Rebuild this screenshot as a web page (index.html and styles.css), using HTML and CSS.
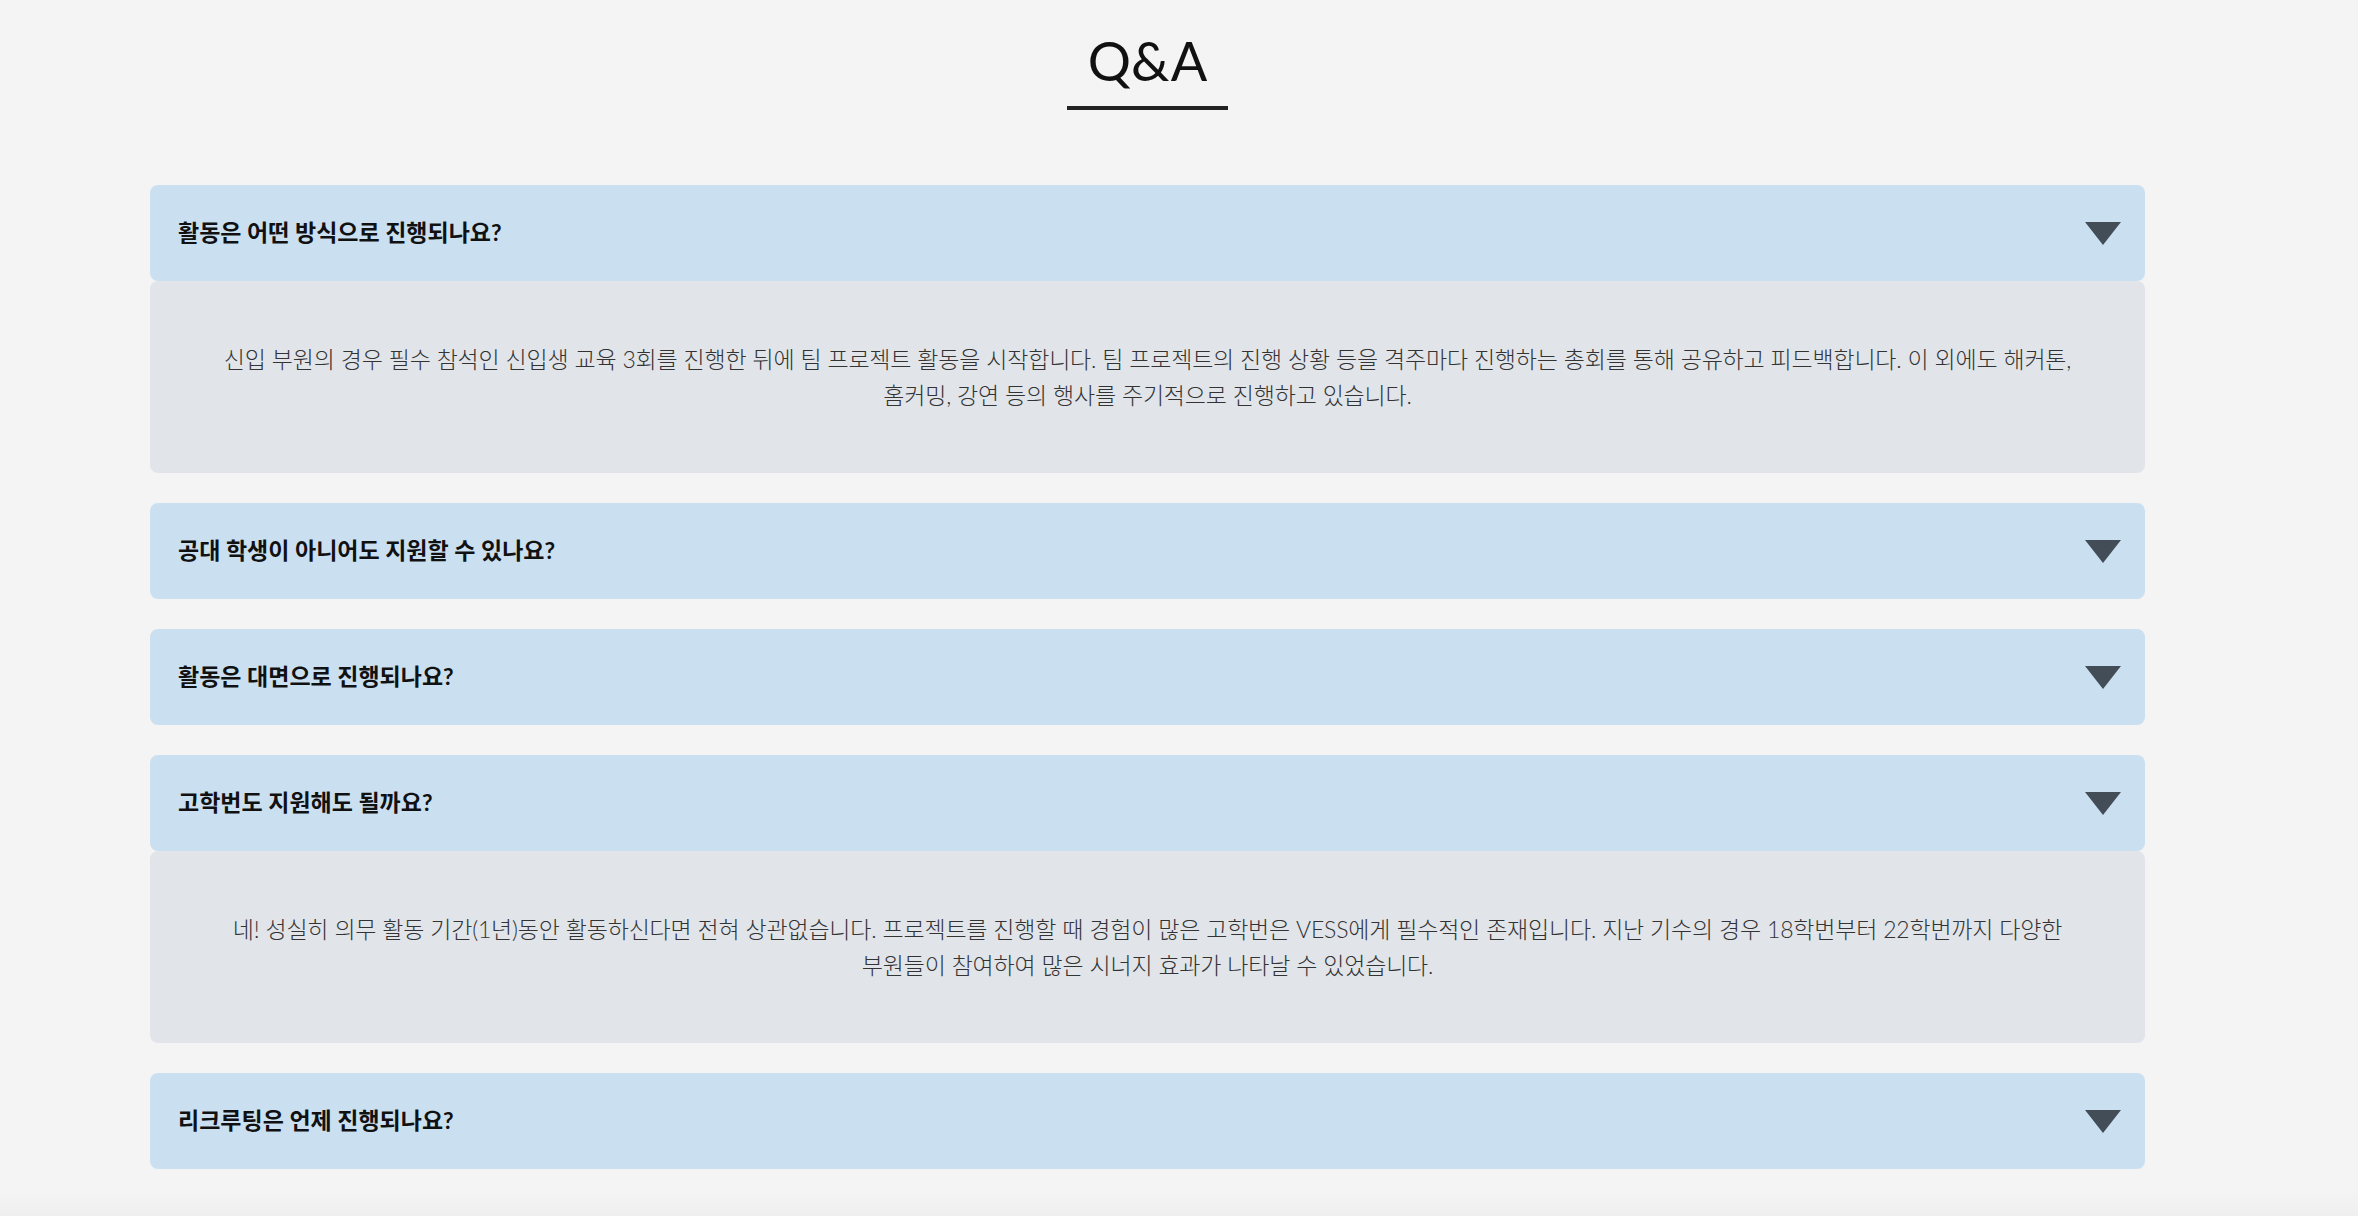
FILE: index.html
```html
<!DOCTYPE html>
<html lang="ko">
<head>
    <meta charset="UTF-8">
    <meta name="viewport" content="width=device-width, initial-scale=1.0">
    <title>Q&amp;A</title>
    <link rel="stylesheet" href="styles.css">
</head>
<body>
    <section class="qna">
        <h2 class="qna-title">Q&amp;A</h2>
        <ul class="qna-list">
            <li class="qna-item open">
                <div class="qna-q"><span>활동은 어떤 방식으로 진행되나요?</span><i class="arrow"></i></div>
                <div class="qna-a">
                    <p>신입 부원의 경우 필수 참석인 신입생 교육 3회를 진행한 뒤에 팀 프로젝트 활동을 시작합니다. 팀 프로젝트의 진행 상황 등을 격주마다 진행하는 총회를 통해 공유하고 피드백합니다. 이 외에도 해커톤, 홈커밍, 강연 등의 행사를 주기적으로 진행하고 있습니다.</p>
                </div>
            </li>
            <li class="qna-item">
                <div class="qna-q"><span>공대 학생이 아니어도 지원할 수 있나요?</span><i class="arrow"></i></div>
                <div class="qna-a">
                    <p>네! 전공과 관계없이 누구나 지원할 수 있습니다.</p>
                </div>
            </li>
            <li class="qna-item">
                <div class="qna-q"><span>활동은 대면으로 진행되나요?</span><i class="arrow"></i></div>
                <div class="qna-a">
                    <p>총회와 주요 행사는 대면으로 진행되며, 팀 활동은 팀별로 자유롭게 진행합니다.</p>
                </div>
            </li>
            <li class="qna-item open">
                <div class="qna-q"><span>고학번도 지원해도 될까요?</span><i class="arrow"></i></div>
                <div class="qna-a">
                    <p>네! 성실히 의무 활동 기간(1년)동안 활동하신다면 전혀 상관없습니다. 프로젝트를 진행할 때 경험이 많은 고학번은 VESS에게 필수적인 존재입니다. 지난 기수의 경우 18학번부터 22학번까지 다양한 부원들이 참여하여 많은 시너지 효과가 나타날 수 있었습니다.</p>
                </div>
            </li>
            <li class="qna-item">
                <div class="qna-q"><span>리크루팅은 언제 진행되나요?</span><i class="arrow"></i></div>
                <div class="qna-a">
                    <p>리크루팅은 매 학기 초에 진행됩니다.</p>
                </div>
            </li>
        </ul>
    </section>
    <div class="page-end"></div>
    <script>
        const list = document.querySelector('.qna-list');
        list.addEventListener('click', e=>{
            const q = e.target.closest('.qna-q');
            if(!q) return;
            q.parentElement.classList.toggle('open');
        })
    </script>
</body>
</html>
```

FILE: styles.css
```css
*{box-sizing:border-box;}
body{
    margin:0;
    background-color:#f4f4f4;
    font-family:Lato, "Noto Sans CJK KR", sans-serif;
}

.qna{
    width:1995px;
    margin-left:150px;
    padding-top:34px;
    text-align:center;
}
.qna-title{
    display:inline-block;
    margin:0;
    padding:0 21px 18px;
    font-size:54px;
    line-height:54px;
    font-weight:400;
    color:#111;
    border-bottom:4px solid #222;
}

.qna-list{
    list-style:none;
    margin:75px 0 0;
    padding:0;
    text-align:left;
}
.qna-item{margin-bottom:30px;}

.qna-q{
    display:flex;
    align-items:center;
    justify-content:space-between;
    height:96px;
    padding:0 24px 0 28px;
    background-color:#cae0f1;
    border-radius:8px;
    cursor:pointer;
}
.qna-q span{
    font-size:23px;
    font-weight:700;
    color:#111;
    padding-bottom:4px;
}
.arrow{
    width:0;
    height:0;
    border-left:18px solid transparent;
    border-right:18px solid transparent;
    border-top:23px solid #434d58;
}

.qna-a{
    display:none;
    padding:60px;
    background-color:#e1e5ea;
    border-radius:8px;
}
.qna-item.open .qna-a{display:block;}
.qna-a p{
    margin:0;
    font-size:23px;
    line-height:36px;
    letter-spacing:-0.2px;
    font-weight:300;
    color:#333;
    text-align:center;
    word-break:keep-all;
}

.page-end{
    height:50px;
    margin-top:-10px;
    background:linear-gradient(#f4f4f4, #ebebeb);
}
```
